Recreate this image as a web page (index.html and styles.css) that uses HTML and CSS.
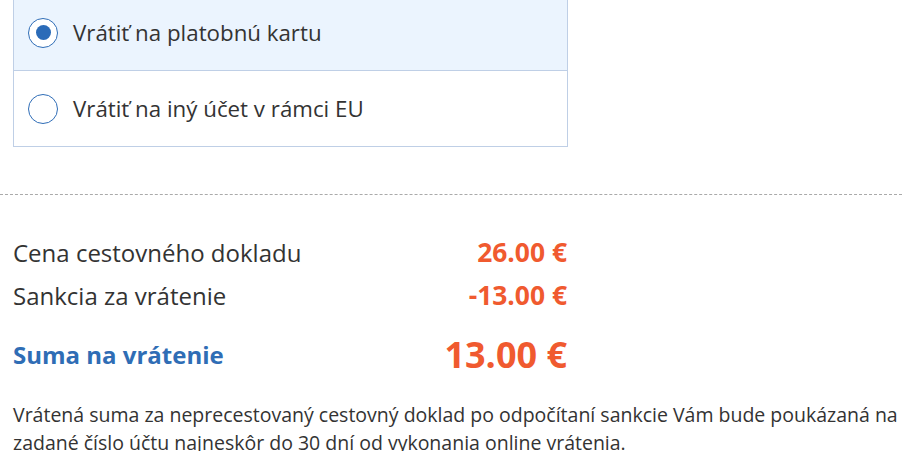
FILE: index.html
```html
<!DOCTYPE html>
<html lang="sk">
<head>
<meta charset="utf-8">
<link rel="stylesheet" href="styles.css">
</head>
<body>
<div class="page">
  <div class="options">
    <label class="option selected">
      <span class="radio checked"></span>
      <span class="option-label">Vrátiť na platobnú kartu</span>
    </label>
    <label class="option">
      <span class="radio"></span>
      <span class="option-label">Vrátiť na iný účet v rámci EU</span>
    </label>
  </div>
  <hr class="divider">
  <div class="summary">
    <div class="row">
      <span class="label">Cena cestovného dokladu</span>
      <span class="value">26.00 €</span>
    </div>
    <div class="row">
      <span class="label">Sankcia za vrátenie</span>
      <span class="value">-13.00 €</span>
    </div>
    <div class="row total">
      <span class="label">Suma na vrátenie</span>
      <span class="value">13.00 €</span>
    </div>
  </div>
  <p class="note">Vrátená suma za neprecestovaný cestovný doklad po odpočítaní sankcie Vám bude poukázaná na zadané číslo účtu najneskôr do 30 dní od vykonania online vrátenia.</p>
</div>
</body>
</html>
```

FILE: styles.css
```css
html, body {
  margin: 0;
  padding: 0;
  background: #fff;
}
body {
  font-family: "Open Sans", "Noto Sans", sans-serif;
  color: #333;
  overflow: hidden;
}
.page {
  width: 902px;
}
.options {
  margin: -6px 0 0 13px;
  width: 553px;
  border: 1px solid #bfcfe6;
}
.option {
  display: flex;
  align-items: center;
  height: 75px;
  padding-left: 14px;
  box-sizing: border-box;
  gap: 15px;
}
.option + .option {
  border-top: 1px solid #bfcfe6;
  height: 76px;
}
.option.selected {
  background: #ebf4fe;
}
.radio {
  width: 30px;
  height: 30px;
  box-sizing: border-box;
  border-radius: 50%;
  border: 1.2px solid #2f6db7;
  background: #fff;
  display: flex;
  align-items: center;
  justify-content: center;
}
.radio.checked::after {
  content: "";
  width: 15px;
  height: 15px;
  border-radius: 50%;
  background: #2b6bb8;
}
.option-label {
  font-size: 22.3px;
  color: #333;
}
.divider {
  border: 0;
  border-top: 1px dashed #aaa;
  margin: 47px 0 0 0;
}
.summary {
  margin: 36px 0 0 13px;
  width: 554px;
}
.row {
  display: flex;
  justify-content: space-between;
  align-items: baseline;
  font-size: 24px;
  line-height: 43px;
}
.value {
  color: #f05a2f;
  font-weight: 700;
  font-size: 26.4px;
}
.row.total {
  margin-top: 16px;
  align-items: flex-end;
}
.row.total .label {
  color: #2f6db5;
  font-weight: 700;
}
.row.total .value {
  font-size: 36px;
  line-height: 42px;
}
.note {
  margin: 25px 0 0 13px;
  font-size: 19.5px;
  line-height: 28px;
  color: #333;
}
```
